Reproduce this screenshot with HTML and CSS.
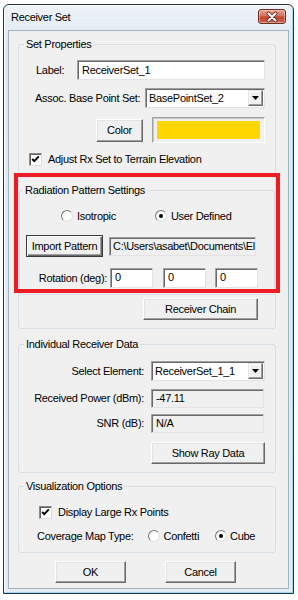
FILE: index.html
```html
<!DOCTYPE html>
<html>
<head>
<meta charset="utf-8">
<title>Receiver Set</title>
<link rel="stylesheet" href="styles.css">
</head>
<body>
<div class="window">
  <div class="titlebar">
    <span class="title">Receiver Set</span>
    <div class="close">
      <svg width="26" height="12" viewBox="0 0 26 12">
        <path d="M9.5 2.5 L16.5 9.5 M16.5 2.5 L9.5 9.5" stroke="#5a2a22" stroke-width="3.6" stroke-linecap="round" fill="none"/>
        <path d="M9.5 2.5 L16.5 9.5 M16.5 2.5 L9.5 9.5" stroke="#ffffff" stroke-width="2" stroke-linecap="round" fill="none"/>
      </svg>
    </div>
  </div>
  <div class="client">
    <fieldset class="group g-set">
      <legend>Set Properties</legend>
      <div class="row r-label">
        <span class="lbl l-label">Label:</span>
        <div class="field f-label">ReceiverSet_1</div>
      </div>
      <div class="row r-assoc">
        <span class="lbl l-assoc">Assoc. Base Point Set:</span>
        <div class="field select f-assoc">
          <span class="sel-text">BasePointSet_2</span>
          <span class="drop"><svg width="7" height="4" viewBox="0 0 7 4"><path d="M0 0 H7 L3.5 4 Z" fill="#000"/></svg></span>
        </div>
      </div>
      <div class="row r-color">
        <div class="btn b-color">Color</div>
        <div class="swatch"><div class="swatch-fill"></div></div>
      </div>
      <div class="row r-check">
        <span class="check c-adjust"><svg width="11" height="11" viewBox="0 0 11 11"><path d="M2.2 5 L4.3 7.2 L8.8 2.4" fill="none" stroke="#000" stroke-width="1.9"/></svg></span>
        <span class="chk-text">Adjust Rx Set to Terrain Elevation</span>
      </div>
      <fieldset class="group g-rad">
        <legend>Radiation Pattern Settings</legend>
        <div class="row r-radio">
          <span class="radio r-iso"></span><span class="rtext">Isotropic</span>
          <span class="radio on r-user"></span><span class="rtext">User Defined</span>
        </div>
        <div class="row r-import">
          <div class="btn default b-import">Import Pattern</div>
          <div class="field ro f-path">C:\Users\asabet\Documents\El</div>
        </div>
        <div class="row r-rot">
          <span class="lbl l-rot">Rotation (deg):</span>
          <div class="field f-rot">0</div>
          <div class="field f-rot f-rot2">0</div>
          <div class="field f-rot f-rot3">0</div>
        </div>
      </fieldset>
      <div class="row r-chain">
        <div class="btn b-chain">Receiver Chain</div>
      </div>
    </fieldset>

    <fieldset class="group g-ind">
      <legend>Individual Receiver Data</legend>
      <div class="row r-sel">
        <span class="lbl col">Select Element:</span>
        <div class="field select f-sel">
          <span class="sel-text">ReceiverSet_1_1</span>
          <span class="drop"><svg width="7" height="4" viewBox="0 0 7 4"><path d="M0 0 H7 L3.5 4 Z" fill="#000"/></svg></span>
        </div>
      </div>
      <div class="row r-pow">
        <span class="lbl col">Received Power (dBm):</span>
        <div class="field ro f-data">-47.11</div>
      </div>
      <div class="row r-snr">
        <span class="lbl col">SNR (dB):</span>
        <div class="field ro f-data">N/A</div>
      </div>
      <div class="row r-ray">
        <div class="btn b-ray">Show Ray Data</div>
      </div>
    </fieldset>

    <fieldset class="group g-vis">
      <legend>Visualization Options</legend>
      <div class="row r-large">
        <span class="check c-large"><svg width="11" height="11" viewBox="0 0 11 11"><path d="M2.2 5 L4.3 7.2 L8.8 2.4" fill="none" stroke="#000" stroke-width="1.9"/></svg></span>
        <span class="chk-text">Display Large Rx Points</span>
      </div>
      <div class="row r-cov">
        <span class="lbl l-cov">Coverage Map Type:</span>
        <span class="radio r-conf"></span><span class="rtext">Confetti</span>
        <span class="radio on r-cube"></span><span class="rtext t-cube">Cube</span>
      </div>
    </fieldset>

    <div class="row r-buttons">
      <div class="btn b-ok">OK</div>
      <div class="btn b-cancel">Cancel</div>
    </div>

    <div class="highlight"></div>
  </div>
</div>
</body>
</html>
```

FILE: styles.css
```css
html, body {
  margin: 0;
  padding: 0;
  background: #ffffff;
}

body {
  font-family: "Liberation Sans", Arial, sans-serif;
  font-size: 11px;
  line-height: 13px;
  letter-spacing: -0.3px;
  color: #000000;
}

.window {
  margin: 4px 0 0 3px;
  width: 291px;
  height: 590px;
  box-sizing: border-box;
  border: 1px solid #26323b;
  border-radius: 6px 6px 0 0;
  background: linear-gradient(#eef3f8, #dfe8f1 40px, #e3ebf3);
  box-shadow: inset -1px -1px 0 #9fdaf2, inset 1px 1px 0 #fbfdff;
  padding: 0 4px 4px 4px;
  display: flex;
  flex-direction: column;
}

.titlebar {
  height: 25px;
  display: flex;
  align-items: flex-start;
  flex: none;
}

.title {
  margin: 6px 0 0 3px;
  font-size: 11px;
}

.close {
  margin: 4px 3px 0 auto;
  width: 28px;
  height: 15px;
  box-sizing: border-box;
  border: 1px solid #6d2c22;
  border-radius: 3px;
  background: linear-gradient(#e7a598, #d2705d 45%, #c2442d 55%, #cc6350);
  display: flex;
  align-items: center;
  justify-content: center;
  box-shadow: inset 0 0 0 1px rgba(255, 220, 210, 0.5);
}

.close svg {
  display: block;
}

.client {
  position: relative;
  flex: 1;
  border: 1px solid #a3b2c0;
  background: #f0f0f0;
}

/* group boxes */
.group {
  margin: 0 0 0 9px;
  width: 258px;
  box-sizing: border-box;
  border: 1px solid #d5dfe5;
  border-radius: 3px;
  padding: 0;
  min-inline-size: 0;
}

.group legend {
  padding: 0 2px;
  margin-left: 5px;
  line-height: 14px;
  height: 14px;
}

.row {
  display: flex;
  align-items: center;
}

.lbl {
  white-space: nowrap;
}

/* generic controls */
.field {
  box-sizing: border-box;
  background: #ffffff;
  border: 1px solid;
  border-color: #a0a0a0 #e3e3e3 #e3e3e3 #a0a0a0;
  box-shadow: inset 1px 1px 0 #696969;
  padding: 0 3px 0 4px;
  display: flex;
  align-items: center;
  white-space: nowrap;
  overflow: hidden;
}

.field.ro {
  background: #f0f0f0;
}

.select {
  padding: 0 1px 0 3px;
}

.sel-text {
  flex: 1;
}

.drop {
  width: 15px;
  height: 16px;
  box-sizing: border-box;
  background: #f0f0f0;
  border: 1px solid;
  border-color: #e3e3e3 #696969 #696969 #e3e3e3;
  box-shadow: inset -1px -1px 0 #a0a0a0, inset 1px 1px 0 #ffffff;
  display: flex;
  align-items: center;
  justify-content: center;
}

.drop svg {
  display: block;
}

.btn {
  box-sizing: border-box;
  background: #f0f0f0;
  border: 1px solid;
  border-color: #ffffff #696969 #696969 #ffffff;
  box-shadow: inset -1px -1px 0 #a0a0a0, inset 1px 1px 0 #e3e3e3;
  display: flex;
  align-items: center;
  justify-content: center;
  height: 22px;
  white-space: nowrap;
}

.btn.default {
  border: 1px solid #3a3a3a;
  box-shadow: inset 1px 1px 0 #ffffff, inset -1px -1px 0 #696969, inset -2px -2px 0 #a0a0a0;
}

.check {
  width: 13px;
  height: 13px;
  box-sizing: border-box;
  background: #ffffff;
  border: 1px solid;
  border-color: #8a8a8a #dcdcdc #dcdcdc #8a8a8a;
  box-shadow: inset 1px 1px 0 #5f5f5f;
  display: flex;
  align-items: center;
  justify-content: center;
  flex: none;
}

.check svg {
  display: block;
}

.chk-text {
  margin-left: 6px;
}

.radio {
  width: 12px;
  height: 12px;
  box-sizing: border-box;
  border-radius: 50%;
  border: 1px solid;
  border-color: #7a7a7a #e0e0e0 #e0e0e0 #7a7a7a;
  background: radial-gradient(circle at 60% 60%, #ffffff 40%, #e6e6e6);
  display: flex;
  align-items: center;
  justify-content: center;
  flex: none;
}

.radio.on::after {
  content: "";
  width: 4px;
  height: 4px;
  border-radius: 50%;
  background: #000000;
}

.rtext {
  margin-left: 4px;
}

/* Set Properties */
.g-set {
  margin-top: 6px;
  padding: 9px 0 8px 0;
}

.r-label {
  height: 20px;
}

.l-label {
  margin-left: 17px;
}

.f-label {
  margin-left: auto;
  margin-right: 10px;
  width: 188px;
  height: 20px;
}

.r-assoc {
  margin-top: 8px;
  height: 20px;
}

.l-assoc {
  margin-left: 16px;
}

.f-assoc {
  margin-left: auto;
  margin-right: 10px;
  width: 120px;
  height: 20px;
}

.r-color {
  margin-top: 9px;
  height: 26px;
  justify-content: flex-end;
  padding-right: 10px;
}

.b-color {
  width: 47px;
  height: 23px;
}

.swatch {
  margin-left: 9px;
  width: 113px;
  height: 26px;
  box-sizing: border-box;
  border: 1px solid;
  border-color: #a0a0a0 #ffffff #ffffff #a0a0a0;
  box-shadow: inset 1px 1px 0 #c8c8c8;
  padding: 3px 4px 3px 4px;
}

.swatch-fill {
  width: 100%;
  height: 100%;
  background: #ffd700;
}

.r-check {
  margin-top: 10px;
  height: 13px;
}

.c-adjust {
  margin-left: 10px;
}

/* Radiation */
.g-rad {
  margin: 17px 0 0 0;
  width: auto;
  padding: 13px 0 6px 0;
}

.g-rad legend {
  margin-left: 3px;
}

.r-radio {
  height: 12px;
}

.r-iso {
  margin-left: 41px;
}

.r-user {
  margin-left: 39px;
}

.r-import {
  margin-top: 13px;
  height: 22px;
}

.b-import {
  margin-left: 6px;
  width: 77px;
}

.f-path {
  margin-left: 6px;
  width: 147px;
  height: 19px;
  padding-left: 3px;
}

.r-rot {
  margin-top: 11px;
  height: 20px;
}

.l-rot {
  width: 90px;
  box-sizing: border-box;
  text-align: right;
  padding-right: 3px;
}

.f-rot {
  width: 43px;
  height: 20px;
  align-items: flex-start;
  padding-top: 2px;
}

.f-rot2 {
  margin-left: 10px;
}

.f-rot3 {
  margin-left: 9px;
}

.r-chain {
  margin-top: 3px;
  height: 22px;
}

.b-chain {
  margin-left: 124px;
  width: 115px;
}

/* Individual Receiver Data */
.g-ind {
  margin-top: 8px;
  padding: 10px 0 8px 0;
}

.col {
  width: 132px;
  box-sizing: border-box;
  text-align: right;
  padding-right: 7px;
}

.r-sel {
  height: 20px;
}

.f-sel {
  width: 114px;
  height: 20px;
}

.r-pow {
  margin-top: 8px;
  height: 19px;
}

.r-snr {
  margin-top: 6px;
  height: 19px;
}

.f-data {
  width: 113px;
  height: 19px;
}

.r-ray {
  margin-top: 9px;
  height: 22px;
}

.b-ray {
  margin-left: 132px;
  width: 114px;
}

/* Visualization */
.g-vis {
  margin-top: 6px;
  padding: 13px 0 10px 0;
}

.r-large {
  height: 13px;
}

.c-large {
  margin-left: 20px;
}

.r-cov {
  margin-top: 11px;
  height: 12px;
}

.l-cov {
  margin-left: 18px;
}

.r-conf {
  margin-left: 14px;
}

.r-cube {
  margin-left: 16px;
}

.t-cube {
  margin-left: 3px;
}

/* bottom buttons */
.r-buttons {
  margin-top: 8px;
  height: 22px;
}

.b-ok {
  margin-left: 46px;
  width: 71px;
}

.b-cancel {
  margin-left: 39px;
  width: 71px;
}

/* annotation overlay */
.highlight {
  position: absolute;
  left: 5px;
  top: 142px;
  width: 266px;
  height: 120px;
  box-sizing: border-box;
  border: 4px solid #ed1c24;
  pointer-events: none;
}
```
